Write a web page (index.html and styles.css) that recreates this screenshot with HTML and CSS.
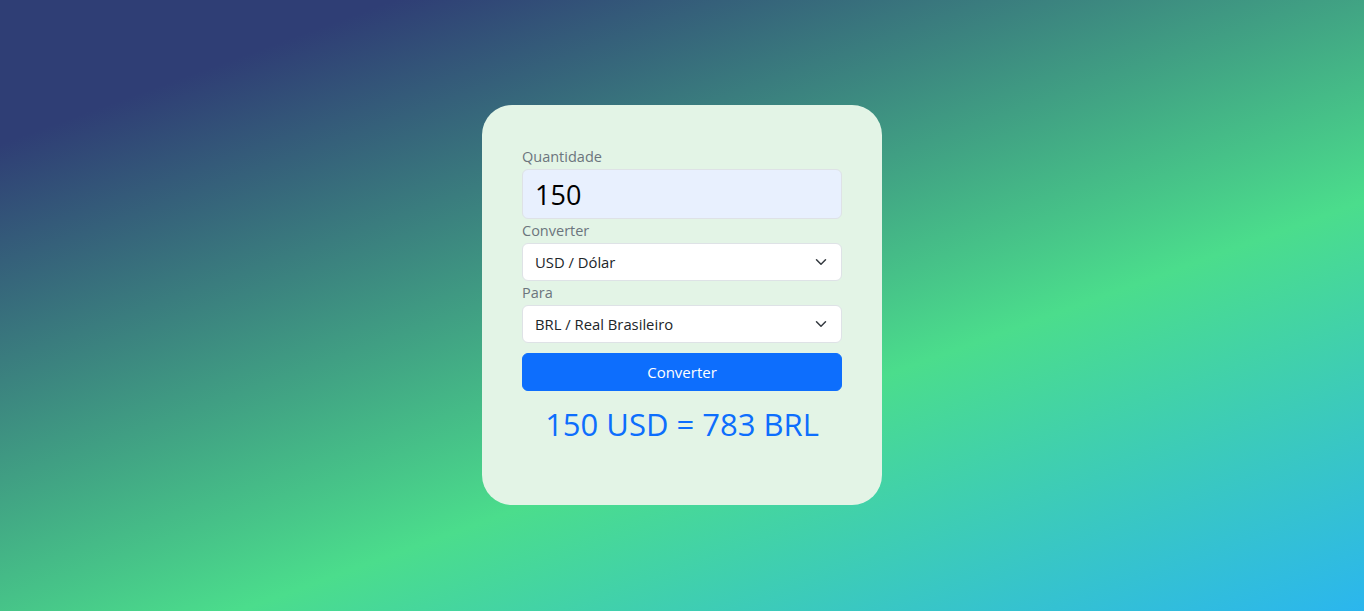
FILE: index.html
```html
<!DOCTYPE html>
<html lang="pt-BR">
<head>
<meta charset="utf-8">
<title>Conversor de Moedas</title>
<link rel="stylesheet" href="styles.css">
</head>
<body>
  <main class="card">
    <label class="field-label" for="qtd">Quantidade</label>
    <input class="amount" id="qtd" type="text" value="150">

    <label class="field-label" for="from">Converter</label>
    <div class="select-wrap">
      <select class="select" id="from">
        <option>USD / Dólar</option>
      </select>
      <svg class="chevron" viewBox="0 0 16 16" width="16" height="12" aria-hidden="true"><path d="M2 5l6 6 6-6" fill="none" stroke="#343a40" stroke-width="2" stroke-linecap="round" stroke-linejoin="round"/></svg>
    </div>

    <label class="field-label" for="to">Para</label>
    <div class="select-wrap">
      <select class="select" id="to">
        <option>BRL / Real Brasileiro</option>
      </select>
      <svg class="chevron" viewBox="0 0 16 16" width="16" height="12" aria-hidden="true"><path d="M2 5l6 6 6-6" fill="none" stroke="#343a40" stroke-width="2" stroke-linecap="round" stroke-linejoin="round"/></svg>
    </div>

    <button class="btn" type="button">Converter</button>

    <p class="result">150 USD = 783 BRL</p>
  </main>
</body>
</html>
```

FILE: styles.css
```css
* { box-sizing: border-box; }

html, body { height: 100%; }

body {
  margin: 0;
  padding-bottom: 1px;
  min-height: 100vh;
  display: flex;
  align-items: center;
  justify-content: center;
  font-family: "Open Sans", "Noto Sans", sans-serif;
  background: linear-gradient(160deg, #2f3e75 13%, #4bdd8c 63%, #2bb6ee 100%);
  color: #212529;
}

.card {
  width: 400px;
  height: 400px;
  padding: 40px;
  background: #e3f4e6;
  border-radius: 30px;
  display: flex;
  flex-direction: column;
}

.field-label {
  display: block;
  height: 24px;
  line-height: 24px;
  font-size: 14.5px;
  color: #6c757d;
}

.amount {
  width: 100%;
  height: 50px;
  padding: 0 12px;
  border: 1px solid #dee2e6;
  border-radius: 6px;
  background: #e8f0fe;
  font-family: inherit;
  font-size: 27px;
  color: #000;
  outline: none;
}

.select-wrap {
  position: relative;
}

.select {
  width: 100%;
  height: 38px;
  padding: 0 36px 0 12px;
  border: 1px solid #dee2e6;
  border-radius: 6px;
  background: #fff;
  font-family: inherit;
  font-size: 14.8px;
  color: #212529;
  appearance: none;
  -webkit-appearance: none;
  outline: none;
}

.chevron {
  position: absolute;
  right: 13px;
  top: 13px;
  pointer-events: none;
}

.btn {
  margin-top: 10px;
  height: 38px;
  width: 100%;
  border: 1px solid #0d6efd;
  border-radius: 6px;
  background: #0d6efd;
  color: #fff;
  font-family: inherit;
  font-size: 15px;
}

.result {
  margin: 14px 0 0;
  text-align: center;
  font-size: 31px;
  line-height: 38px;
  color: #0d6efd;
}
```
